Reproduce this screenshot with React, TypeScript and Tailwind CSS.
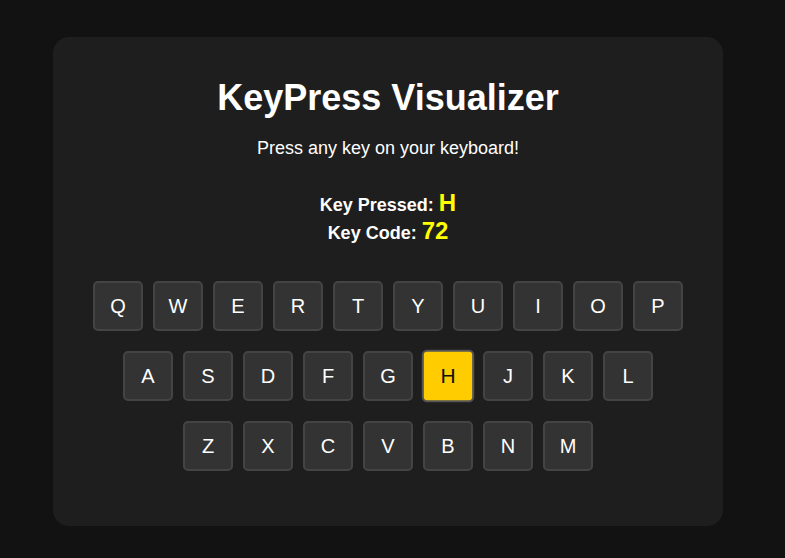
import { useEffect, useState } from "react"

const rows = [
  ["Q", "W", "E", "R", "T", "Y", "U", "I", "O", "P"],
  ["A", "S", "D", "F", "G", "H", "J", "K", "L"],
  ["Z", "X", "C", "V", "B", "N", "M"],
]

function Key({ label, active }: { label: string; active: boolean }) {
  return (
    <div
      className={`flex h-[50px] w-[50px] items-center justify-center rounded-[5px] border-2 text-[20px] ${
        active
          ? "scale-105 border-[#555] bg-[#ffcc00] text-[#111]"
          : "border-[#444] bg-[#333] text-white"
      }`}
    >
      {label}
    </div>
  )
}

export default function App() {
  const [key, setKey] = useState("H")
  const [code, setCode] = useState(72)

  // Track the last key the user hit
  useEffect(() => {
    const onKey = (e: KeyboardEvent) => {
      setKey(e.key.length === 1 ? e.key.toUpperCase() : e.key)
      setCode(e.keyCode)
    }
    window.addEventListener("keydown", onKey)
    return () => window.removeEventListener("keydown", onKey)
  }, [])

  return (
    <div className="min-h-screen bg-[#121212] pl-[53px] pt-[37px] font-['Liberation_Sans',Arial,sans-serif] text-white">
      <div className="w-[670px] rounded-[16px] bg-[#1e1e1e] px-[40px] pb-[55px] pt-[40px] text-center">
        <h1 className="text-[36px] font-bold leading-[41px]">KeyPress Visualizer</h1>
        <p className="mt-[20px] text-[18px] leading-[21px]">Press any key on your keyboard!</p>

        <div className="mt-[30px] text-[18px] font-bold leading-[normal]">
          <div>
            Key Pressed: <span className="text-[24px] text-[#ffff00]">{key}</span>
          </div>
          <div>
            Key Code: <span className="text-[24px] text-[#ffff00]">{code}</span>
          </div>
        </div>

        <div className="mt-[36px] flex flex-col gap-[20px]">
          {rows.map((row, i) => (
            <div key={i} className="flex justify-center gap-[10px]">
              {row.map((k) => (
                <Key key={k} label={k} active={k === key} />
              ))}
            </div>
          ))}
        </div>
      </div>
    </div>
  )
}
